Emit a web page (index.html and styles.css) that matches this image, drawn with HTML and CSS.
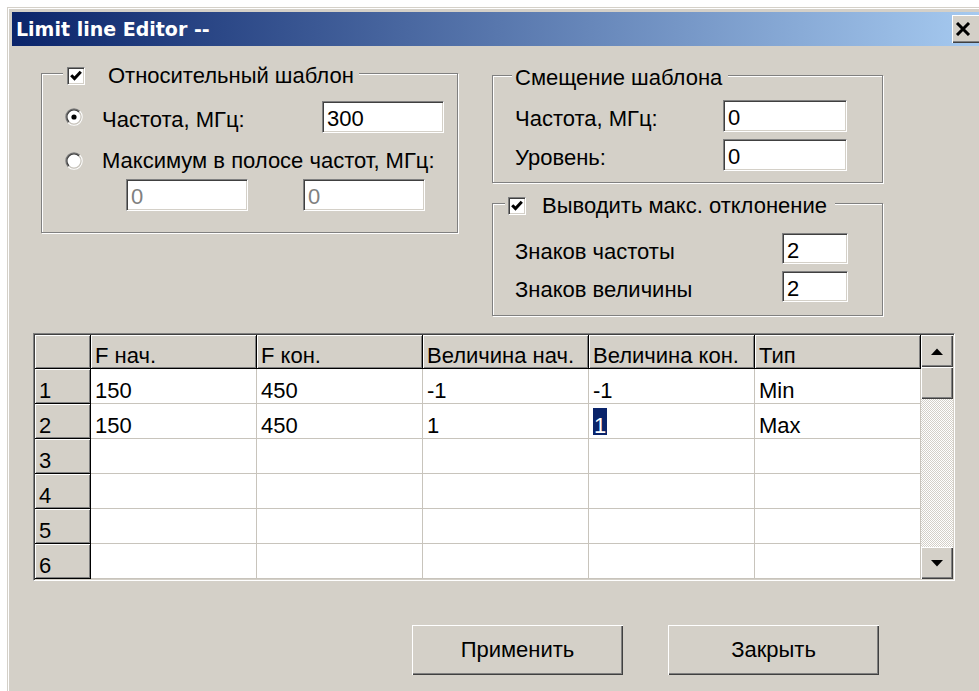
FILE: index.html
```html
<!DOCTYPE html>
<html lang="ru">
<head>
<meta charset="utf-8">
<title>Limit line Editor</title>
<link rel="stylesheet" href="styles.css">
</head>
<body>
<div class="window">
  <div class="titlebar">
    <span class="title">Limit line Editor --</span>
    <button class="close" type="button" aria-label="Закрыть">
      <svg width="16" height="14" viewBox="0 0 16 14"><path d="M2 1 L14 13 M14 1 L2 13" stroke="#000" stroke-width="3" fill="none"/></svg>
    </button>
  </div>

  <div class="client">
    <div class="top">
      <!-- relative template -->
      <div class="group g-rel">
        <div class="legend lg-rel">
          <span class="check"><svg width="14" height="14" viewBox="0 0 14 14"><path d="M2.2 6.2 L5.5 9.6 L11.8 2.8" stroke="#000" stroke-width="3" fill="none"/></svg></span>
          <span class="ltext">Относительный шаблон</span>
        </div>
        <div class="row r-freq">
          <span class="radio"><svg width="18" height="18" viewBox="0 0 18 18">
            <circle cx="9" cy="9" r="7.5" fill="#fff"/>
            <path d="M3.3 14.7 A8 8 0 0 1 14.7 3.3" stroke="#808080" stroke-width="1.3" fill="none"/>
            <path d="M4 14 A7 7 0 0 1 14 4" stroke="#404040" stroke-width="1.2" fill="none"/>
            <path d="M14.7 3.3 A8 8 0 0 1 3.3 14.7" stroke="#fff" stroke-width="1.3" fill="none"/>
            <path d="M14 4 A7 7 0 0 1 4 14" stroke="#c8c4bc" stroke-width="1.2" fill="none"/>
            <circle cx="9" cy="9" r="2.6" fill="#000"/>
          </svg></span>
          <span class="lbl w-rfreq">Частота, МГц:</span>
          <input class="edit e-rel" type="text" value="300">
        </div>
        <div class="row r-max">
          <span class="radio"><svg width="18" height="18" viewBox="0 0 18 18">
            <circle cx="9" cy="9" r="7.5" fill="#fff"/>
            <path d="M3.3 14.7 A8 8 0 0 1 14.7 3.3" stroke="#808080" stroke-width="1.3" fill="none"/>
            <path d="M4 14 A7 7 0 0 1 14 4" stroke="#404040" stroke-width="1.2" fill="none"/>
            <path d="M14.7 3.3 A8 8 0 0 1 3.3 14.7" stroke="#fff" stroke-width="1.3" fill="none"/>
            <path d="M14 4 A7 7 0 0 1 4 14" stroke="#c8c4bc" stroke-width="1.2" fill="none"/>
          </svg></span>
          <span class="lbl">Максимум в полосе частот, МГц:</span>
        </div>
        <div class="row r-band">
          <input class="edit e-rel" type="text" value="0" disabled>
          <input class="edit e-rel" type="text" value="0" disabled>
        </div>
      </div>

      <div class="side">
        <!-- template offset -->
        <div class="group g-off">
          <div class="legend lg-off"><span class="ltext">Смещение шаблона</span></div>
          <div class="row r-off1">
            <span class="lbl w-off">Частота, МГц:</span>
            <input class="edit e-off" type="text" value="0">
          </div>
          <div class="row r-off2">
            <span class="lbl w-off">Уровень:</span>
            <input class="edit e-off" type="text" value="0">
          </div>
        </div>

        <!-- max deviation output -->
        <div class="group g-dev">
          <div class="legend lg-dev">
            <span class="check"><svg width="14" height="14" viewBox="0 0 14 14"><path d="M2.2 6.2 L5.5 9.6 L11.8 2.8" stroke="#000" stroke-width="3" fill="none"/></svg></span>
            <span class="ltext">Выводить макс. отклонение</span>
          </div>
          <div class="row r-dev1">
            <span class="lbl w-dev">Знаков частоты</span>
            <input class="edit e-dev" type="text" value="2">
          </div>
          <div class="row r-dev2">
            <span class="lbl w-dev">Знаков величины</span>
            <input class="edit e-dev" type="text" value="2">
          </div>
        </div>
      </div>
    </div>

    <div class="grid">
      <table class="cells">
        <colgroup>
          <col class="c-fix"><col class="c-dat"><col class="c-dat"><col class="c-dat"><col class="c-dat"><col class="c-dat">
        </colgroup>
        <thead>
          <tr><th></th><th>F нач.</th><th>F кон.</th><th>Величина нач.</th><th>Величина кон.</th><th>Тип</th></tr>
        </thead>
        <tbody>
          <tr><th>1</th><td>150</td><td>450</td><td>-1</td><td>-1</td><td>Min</td></tr>
          <tr><th>2</th><td>150</td><td>450</td><td>1</td><td><span class="sel">1</span></td><td>Max</td></tr>
          <tr><th>3</th><td></td><td></td><td></td><td></td><td></td></tr>
          <tr><th>4</th><td></td><td></td><td></td><td></td><td></td></tr>
          <tr><th>5</th><td></td><td></td><td></td><td></td><td></td></tr>
          <tr><th>6</th><td></td><td></td><td></td><td></td><td></td></tr>
        </tbody>
      </table>
      <div class="vscroll">
        <span class="sbtn"><svg width="12" height="7" viewBox="0 0 12 7"><path d="M0 7 L6 0.5 L12 7Z" fill="#000"/></svg></span>
        <span class="thumb"></span>
        <span class="track"></span>
        <span class="sbtn"><svg width="12" height="7" viewBox="0 0 12 7"><path d="M0 0 L6 6.5 L12 0Z" fill="#000"/></svg></span>
      </div>
    </div>

    <div class="buttons">
      <button class="btn" type="button">Применить</button>
      <button class="btn" type="button">Закрыть</button>
    </div>
  </div>
</div>
</body>
</html>
```

FILE: styles.css
```css
* { box-sizing: border-box; }

html, body { margin: 0; }

body {
  width: 979px;
  height: 691px;
  overflow: hidden;
  background: #fff;
  font-family: "Liberation Sans", Arial, sans-serif;
  font-size: 22px;
  color: #000;
}

/* dialog frame */
.window {
  margin: 7px 0 0 7px;
  width: 980px;
  height: 700px;
  padding: 4px;
  background: #d4d0c8;
  border: 1px solid #d4d0c8;
  box-shadow: inset 1px 1px 0 #fff;
}

.titlebar {
  display: flex;
  align-items: center;
  height: 34px;
  padding-left: 4px;
  background: linear-gradient(to right, #0a246a, #a6caf0);
}

.title {
  font-family: "DejaVu Sans", Verdana, sans-serif;
  font-weight: bold;
  font-size: 19px;
  color: #fff;
  white-space: nowrap;
}

.close {
  margin-left: auto;
  width: 30px;
  height: 28px;
  padding: 0 0 0 3px;
  display: flex;
  align-items: center;
  justify-content: flex-start;
  background: #d4d0c8;
  border: 0;
  box-shadow: inset 1px 1px 0 #fff, inset -1px -1px 0 #404040, inset -2px -2px 0 #808080;
}

/* upper part: group boxes */
.top {
  display: flex;
  align-items: flex-start;
  margin-top: 27px;
  padding-left: 29px;
}

.group {
  border: 1px solid #808080;
  box-shadow: inset 1px 1px 0 #fff, 1px 1px 0 #fff;
}

.legend {
  display: flex;
  align-items: center;
  width: max-content;
  height: 25px;
  line-height: 25px;
  margin-top: -11px;
  background: #d4d0c8;
  white-space: nowrap;
}

.check {
  display: flex;
  align-items: center;
  justify-content: center;
  width: 18px;
  height: 18px;
  background: #fff;
  border: 1px solid;
  border-color: #808080 #fff #fff #808080;
  box-shadow: inset 1px 1px 0 #404040, inset -1px -1px 0 #d4d0c8;
}

.radio { display: flex; width: 18px; height: 18px; }

.row {
  display: flex;
  align-items: center;
}

.lbl {
  line-height: 25px;
  padding-top: 5px;
  white-space: nowrap;
}

.edit {
  height: 32px;
  margin: 0;
  padding: 4px 0 0 4px;
  font: inherit;
  line-height: 25px;
  color: #000;
  background: #fff;
  border: 1px solid;
  border-color: #808080 #fff #fff #808080;
  box-shadow: inset 1px 1px 0 #404040, inset -1px -1px 0 #d4d0c8;
  outline: none;
}

.edit:disabled { color: #808080; background: #fff; }

/* relative template */
.g-rel { width: 417px; padding-bottom: 21px; }
.lg-rel { margin-left: 21px; padding: 0 5px 0 4px; }
.lg-rel .ltext { margin-left: 23px; }
.r-freq { margin-top: 13px; height: 32px; padding-left: 23px; }
.r-freq .lbl { margin-left: 19px; width: 220px; }
.r-max { margin-top: 15px; height: 25px; padding-left: 23px; }
.r-max .lbl { margin-left: 19px; padding-top: 0; }
.r-band { margin-top: 6px; padding-left: 84px; gap: 55px; }
.e-rel { width: 122px; }

.side { margin-left: 34px; margin-top: 2px; width: 391px; }

/* offset group */
.g-off { padding-bottom: 11px; }
.lg-off { margin-left: 19px; padding: 0 6px 0 3px; }
.r-off1 { margin-top: 10px; padding-left: 22px; }
.r-off2 { margin-top: 7px; padding-left: 22px; }
.w-off { width: 208px; }
.e-off { width: 124px; }

/* deviation group */
.g-dev { margin-top: 20px; padding-bottom: 13px; }
.lg-dev { margin-left: 12px; padding: 0 8px 0 3px; }
.lg-dev .ltext { margin-left: 16px; }
.r-dev1 { margin-top: 15px; padding-left: 22px; }
.r-dev2 { margin-top: 7px; padding-left: 22px; }
.w-dev { width: 267px; }
.e-dev { width: 66px; height: 31px; }

/* string grid */
.grid {
  display: flex;
  width: 922px;
  margin: 17px 0 0 21px;
  padding: 1px;
  border: 1px solid;
  border-color: #808080 #fff #fff #808080;
  box-shadow: inset 1px 1px 0 #404040, inset -1px -1px 0 #d4d0c8;
}

.cells {
  width: 886px;
  table-layout: fixed;
  border-collapse: separate;
  border-spacing: 0;
  background: #fff;
}

.c-fix { width: 56px; }
.c-dat { width: 166px; }

.cells th,
.cells td {
  height: 34px;
  padding: 9px 0 0 4px;
  vertical-align: top;
  text-align: left;
  font-weight: normal;
  line-height: 25px;
  white-space: nowrap;
  overflow: hidden;
}

.cells td {
  border-right: 1px solid #c8c4bc;
  border-bottom: 1px solid #c8c4bc;
}

.cells th {
  background: #d4d0c8;
  border-right: 1px solid #000;
  border-bottom: 1px solid #000;
  box-shadow: inset 1px 1px 0 #fff, inset -1px -1px 0 #808080;
}

.cells thead th { height: 33px; padding-top: 8px; }

.sel {
  display: inline-block;
  height: 27px;
  margin-top: -5px;
  padding: 5px 1px 0 1px;
  vertical-align: top;
  background: #0a246a;
  color: #fff;
}

.vscroll {
  display: flex;
  flex-direction: column;
  width: 32px;
}

.sbtn,
.thumb {
  display: flex;
  align-items: center;
  justify-content: center;
  height: 32px;
  background: #d4d0c8;
  box-shadow: inset 1px 1px 0 #fff, inset -1px -1px 0 #404040, inset -2px -2px 0 #808080;
}

.track {
  flex: 1;
  background: repeating-conic-gradient(#fff 0 25%, #d4d0c8 0 50%) 0 0 / 2px 2px;
}

/* dialog buttons */
.buttons {
  display: flex;
  gap: 45px;
  margin-top: 44px;
  padding-left: 400px;
}

.btn {
  width: 211px;
  height: 50px;
  padding: 0;
  font: inherit;
  color: #000;
  background: #d4d0c8;
  border: 0;
  box-shadow: inset 1px 1px 0 #fff, inset -1px -1px 0 #404040, inset -2px -2px 0 #808080;
}
```
